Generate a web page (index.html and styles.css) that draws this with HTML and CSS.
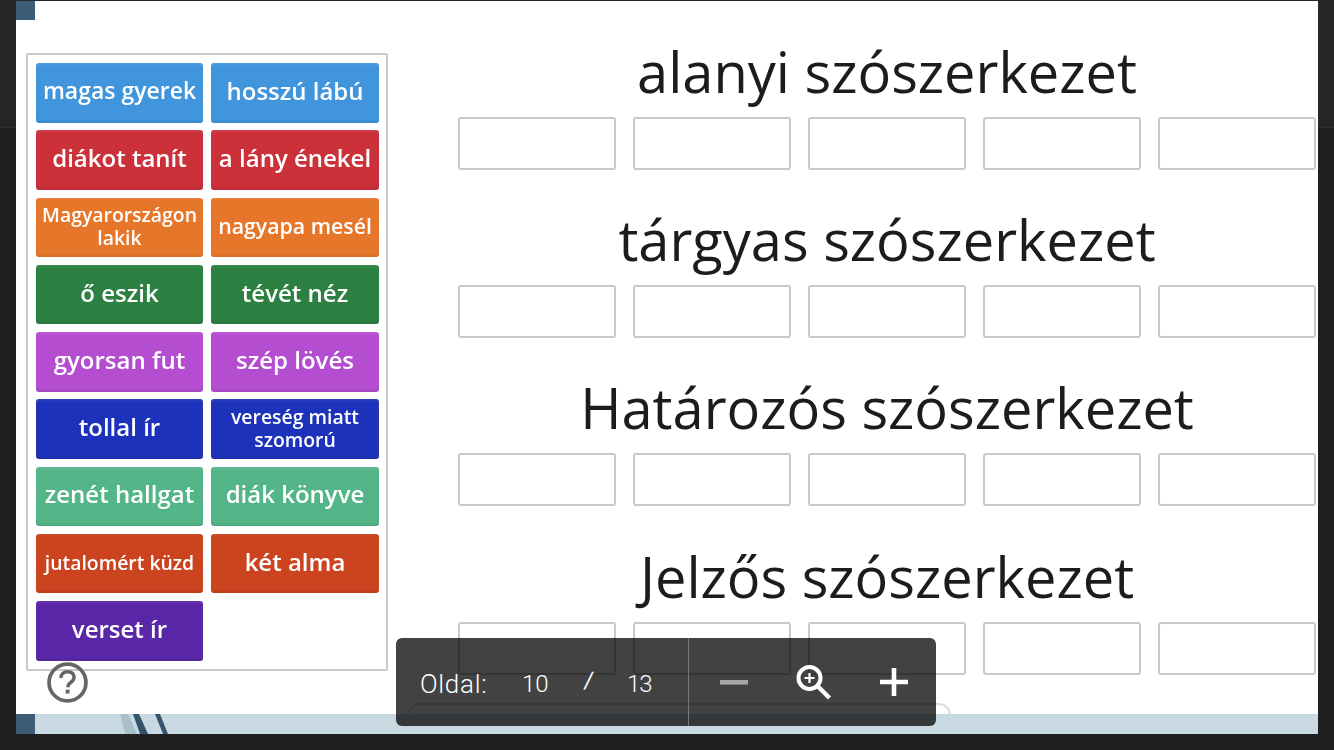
FILE: index.html
```html
<!DOCTYPE html>
<html lang="hu">
<head>
<meta charset="utf-8">
<title>Szószerkezetek</title>
<link rel="stylesheet" href="styles.css">
</head>
<body>
<div class="backdrop"><div class="backdrop-top"></div></div>
<main class="slide">
  <div class="corner corner-top"></div>
  <div class="content">
    <section class="tray">
      <div class="tile blue fit23">magas gyerek</div>
      <div class="tile blue">hosszú lábú</div>
      <div class="tile red">diákot tanít</div>
      <div class="tile red">a lány énekel</div>
      <div class="tile orange small">Magyarországon lakik</div>
      <div class="tile orange mid">nagyapa mesél</div>
      <div class="tile green">ő eszik</div>
      <div class="tile green">tévét néz</div>
      <div class="tile violet">gyorsan fut</div>
      <div class="tile violet">szép lövés</div>
      <div class="tile navy">tollal ír</div>
      <div class="tile navy small">vereség miatt szomorú</div>
      <div class="tile mint">zenét hallgat</div>
      <div class="tile mint">diák könyve</div>
      <div class="tile rust small">jutalomért küzd</div>
      <div class="tile rust">két alma</div>
      <div class="tile purple">verset ír</div>
    </section>
    <section class="groups">
      <div class="group">
        <h2>alanyi szószerkezet</h2>
        <div class="slots"><div></div><div></div><div></div><div></div><div></div></div>
      </div>
      <div class="group">
        <h2>tárgyas szószerkezet</h2>
        <div class="slots"><div></div><div></div><div></div><div></div><div></div></div>
      </div>
      <div class="group">
        <h2>Határozós szószerkezet</h2>
        <div class="slots"><div></div><div></div><div></div><div></div><div></div></div>
      </div>
      <div class="group">
        <h2>Jelzős szószerkezet</h2>
        <div class="slots"><div></div><div></div><div></div><div></div><div></div></div>
      </div>
    </section>
  </div>
  <svg class="help" viewBox="0 0 40 40" aria-label="Súgó">
    <circle cx="20" cy="20" r="18" fill="none" stroke="#666" stroke-width="3.6"/>
    <path d="M13.6 15.6c0-3.8 2.9-6.2 6.5-6.2s6.3 2.2 6.3 5.4c0 2.6-1.5 3.9-3.3 5.2-1.8 1.3-2.7 2.4-2.7 4.6" fill="none" stroke="#666" stroke-width="3.4"/>
    <rect x="18.2" y="27" width="3.8" height="3.8" fill="#666"/>
  </svg>
  <div class="outline-box"></div>
  <footer class="band">
    <div class="corner"></div>
    <svg class="stripes" viewBox="0 0 60 20" aria-hidden="true">
      <path d="M4 0h8l9 20h-12z" fill="#a9bfcb"/>
      <path d="M17 0h6l9 20h-8z" fill="#34546e"/>
      <path d="M39 0h5l8 20h-5z" fill="#34546e"/>
    </svg>
  </footer>
</main>
<nav class="toolbar">
  <div class="pages">
    <span class="label">Oldal:</span>
    <span class="current">10</span>
    <span class="sep">/</span>
    <span class="total">13</span>
  </div>
  <div class="zoom">
    <svg class="ic" viewBox="0 0 36 36" aria-label="Kicsinyítés"><rect x="4" y="16" width="28" height="4.6" fill="#a6a6a6"/></svg>
    <svg class="ic" viewBox="0 0 36 36" aria-label="Nagyítás">
      <circle cx="13.5" cy="14" r="11" fill="none" stroke="#fff" stroke-width="4"/>
      <path d="M21.5 22l12 12" stroke="#fff" stroke-width="4.4" fill="none"/>
      <path d="M13.5 9v10M8.5 14h10" stroke="#fff" stroke-width="2.2" fill="none"/>
    </svg>
    <svg class="ic" viewBox="0 0 36 36" aria-label="Nagyítás"><path d="M18 4v28M4 18h28" stroke="#fff" stroke-width="4.6" fill="none"/></svg>
  </div>
</nav>
</body>
</html>
```
FILE: styles.css
```css
* { box-sizing: border-box; }
html, body { margin: 0; height: 750px; overflow: hidden; }
body {
  background: #1f1f1f;
  font-family: "Open Sans", "Noto Sans", sans-serif;
  padding: 1px 16px 0;
  position: relative;
}
.backdrop { position: absolute; inset: 0; }
.backdrop-top { height: 128px; background: #262626; border-bottom: 1px solid #2e2e2e; }

.slide {
  position: relative;
  width: 1302px;
  height: 733px;
  background: #fff;
  display: flex;
  flex-direction: column;
  overflow: hidden;
}
.corner { width: 19px; height: 19px; background: #3b5d78; flex: none; }

.content {
  flex: 1;
  display: flex;
  align-items: flex-start;
  padding: 33px 2px 0 10px;
}

.tray {
  width: 362px;
  height: 618px;
  flex: none;
  border: 2px solid #c9c9c9;
  border-radius: 2px;
  padding: 8px 7px 0 8px;
  display: grid;
  grid-template-columns: 167px 168px;
  grid-auto-rows: 59.5px;
  column-gap: 8px;
  row-gap: 7.75px;
}
.tile {
  border-radius: 3px;
  color: #fff;
  font-weight: 600;
  font-size: 24px;
  line-height: 23px;
  display: flex;
  align-items: center;
  justify-content: center;
  text-align: center;
  padding: 0 0 5px;
  box-shadow: inset 0 -2px 3px rgba(0, 0, 0, .08), inset 0 2px 3px rgba(255, 255, 255, .08);
  filter: blur(.4px);
}
.tile.fit23 { font-size: 23px; }
.tile.small { font-size: 19.4px; line-height: 23px; padding: 0 4px 3px; }
.tile.mid { font-size: 21.3px; padding-bottom: 3px; }
.blue { background: #4095dc; }
.red { background: #cc3039; }
.orange { background: #e6762a; }
.green { background: #2c8142; }
.violet { background: #b54dd1; }
.navy { background: #1d32ba; }
.mint { background: #54b588; }
.rust { background: #cc431f; }
.purple { background: #5a27a9; }

.groups {
  margin: -14px 0 0 70px;
  width: 858px;
  display: flex;
  flex-direction: column;
  gap: 37.2px;
}
.group { display: flex; flex-direction: column; }
.group h2 {
  margin: 0 0 14px;
  height: 64px;
  font-size: 56px;
  line-height: 64px;
  font-weight: 400;
  text-align: center;
  color: #1c1c1c;
  filter: blur(.4px);
}
.slots { display: flex; gap: 17px; }
.slots div {
  width: 158px;
  height: 53px;
  border: 2px solid #c9c9c9;
  border-radius: 3px;
  background: #fff;
}

.help { position: absolute; left: 31px; top: 661px; width: 41px; height: 41px; }

.outline-box {
  position: absolute;
  left: 391px;
  top: 702px;
  width: 544px;
  height: 30px;
  border: 2px solid #dcdcdc;
  border-radius: 12px;
  background: #fff;
}

.band {
  position: absolute;
  left: 0;
  right: 0;
  bottom: 0;
  height: 20px;
  background: #c8d9e2;
}
.band .corner { height: 20px; }
.stripes { position: absolute; left: 100px; top: 0; width: 60px; height: 20px; }

.toolbar {
  position: absolute;
  left: 396px;
  top: 638px;
  width: 540px;
  height: 88px;
  background: rgba(0, 0, 0, .74);
  border-radius: 6px;
  display: flex;
  color: #fff;
  font-family: Roboto, "Open Sans", sans-serif;
  font-weight: 300;
  font-size: 24px;
}
.pages {
  width: 293px;
  flex: none;
  border-right: 1px solid #777;
  display: flex;
  align-items: center;
  padding: 3px 0 0 24px;
}
.pages span { display: block; }
.label { width: 102px; font-size: 26px; letter-spacing: .7px; }
.current { width: 62px; }
.sep { width: 43px; font-size: 23px; font-weight: 400; transform: translateY(-3px) skewX(-6deg); }
.total { letter-spacing: -1px; }
.zoom {
  flex: 1;
  display: flex;
  align-items: center;
  padding-left: 27px;
  gap: 44px;
}
.ic { width: 36px; height: 36px; flex: none; }
```
